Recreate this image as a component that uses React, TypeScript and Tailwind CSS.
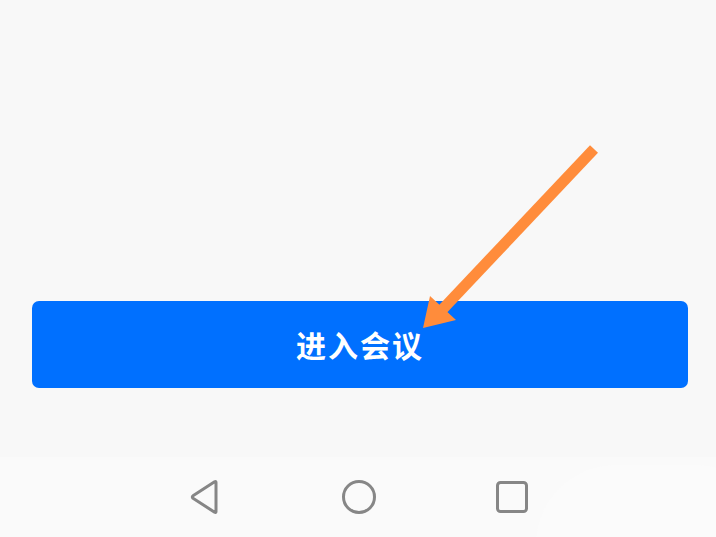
import { useState } from 'react';

// Overlay arrow pointing at the join button
function PointerArrow() {
  return (
    <svg
      className="absolute left-0 top-0 pointer-events-none"
      width="716"
      height="537"
      viewBox="0 0 716 537"
    >
      <line x1="594" y1="149" x2="440" y2="312" stroke="#ff8c3b" strokeWidth="11" strokeLinecap="butt" />
      <polygon points="423,328 456,320 430,296" fill="#ff8c3b" />
    </svg>
  );
}

function NavBar() {
  return (
    <div className="relative h-[80px] bg-[#fafafa] flex items-center justify-center overflow-hidden">
      <div className="absolute right-[-60px] top-[8px] w-[240px] h-[160px] rounded-full bg-[#fbfbfb]" />
      <div className="relative flex items-center gap-[118px] pl-[2px]">
        <svg width="34" height="36" viewBox="0 0 34 36">
          <path
            d="M27 3.5 L27 32.5 Q27 34 25.6 33.2 L4 19.3 Q2.6 18 4 16.8 L25.6 2.8 Q27 2 27 3.5 Z"
            fill="none"
            stroke="#868686"
            strokeWidth="3"
            strokeLinejoin="round"
          />
        </svg>
        <svg width="36" height="36" viewBox="0 0 36 36">
          <circle cx="18" cy="18" r="15.5" fill="none" stroke="#868686" strokeWidth="3" />
        </svg>
        <svg width="34" height="34" viewBox="0 0 34 34">
          <rect x="2.5" y="2.5" width="29" height="29" rx="3" fill="none" stroke="#868686" strokeWidth="3" />
        </svg>
      </div>
    </div>
  );
}

export default function App() {
  const [joined, setJoined] = useState(false);

  return (
    <div
      className="relative w-[716px] h-[537px] overflow-hidden bg-[#f8f8f8] flex flex-col"
      style={{ fontFamily: '"Noto Sans CJK SC", "Noto Sans", sans-serif' }}
    >
      <div className="flex-1 flex flex-col justify-end pl-[32px] pr-[28px] pb-[69px]">
        <button
          onClick={() => setJoined(!joined)}
          className="h-[87px] w-full rounded-[7px] bg-[#0070ff] text-white text-[30px] font-semibold tracking-[2px] flex items-center justify-center"
        >
          进入会议
        </button>
      </div>
      <NavBar />
      <PointerArrow />
    </div>
  );
}
